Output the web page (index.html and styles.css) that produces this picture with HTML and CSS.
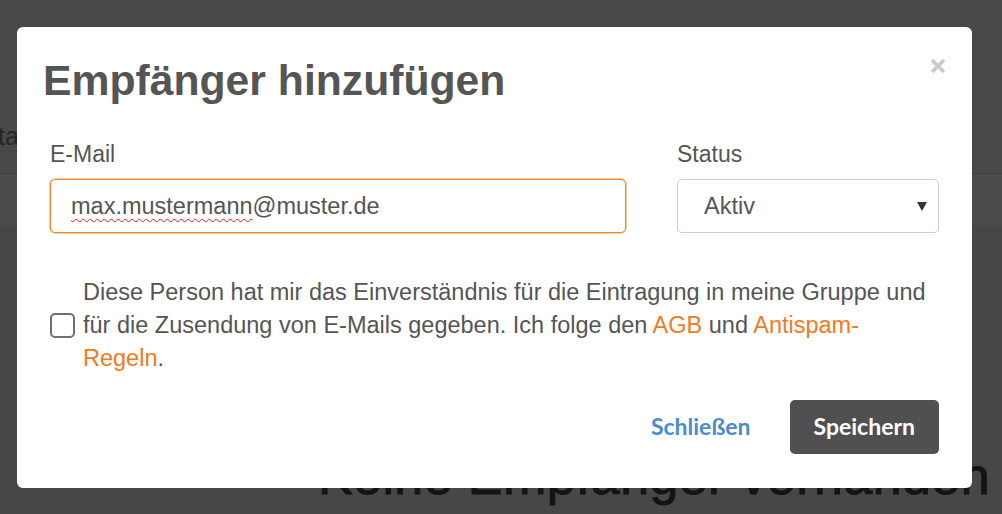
FILE: index.html
```html
<!DOCTYPE html>
<html lang="de">
<head>
<meta charset="utf-8">
<title>Empfänger hinzufügen</title>
<link rel="stylesheet" href="styles.css">
</head>
<body>
<div class="page">
  <header class="topbar"><span class="nav-frag">ta</span></header>
  <div class="subbar"></div>
  <main class="content">
    <h1 class="empty-title">Keine Empfänger vorhanden</h1>
  </main>
</div>

<div class="overlay">
  <div class="modal">
    <div class="modal-header">
      <h2 class="modal-title">Empfänger hinzufügen</h2>
      <button class="close" type="button" aria-label="Schließen">
        <svg width="16" height="16" viewBox="0 0 16 16"><path d="M2 2 L14 14 M14 2 L2 14" stroke="#c9c9c9" stroke-width="3.6" stroke-linecap="butt"/></svg>
      </button>
    </div>
    <div class="modal-body">
      <div class="form-row">
        <div class="field">
          <label class="label">E-Mail</label>
          <div class="input focused"><span class="misspelled">max.mustermann</span>@muster.de</div>
        </div>
        <div class="field">
          <label class="label">Status</label>
          <div class="input select"><span>Aktiv</span>
            <svg class="caret" width="10" height="9" viewBox="0 0 10 9"><path d="M0 0 H10 L5 9 Z" fill="#333"/></svg>
          </div>
        </div>
      </div>
      <div class="consent">
        <span class="checkbox"></span>
        <p class="consent-text">Diese Person hat mir das Einverständnis für die Eintragung in meine Gruppe und für die Zusendung von E-Mails gegeben. Ich folge den <a class="link">AGB</a> und <a class="link">Antispam-Regeln</a>.</p>
      </div>
    </div>
    <div class="modal-footer">
      <button class="btn btn-link" type="button">Schließen</button>
      <button class="btn btn-dark" type="button">Speichern</button>
    </div>
  </div>
</div>
</body>
</html>
```

FILE: styles.css
```css
html, body {
  margin: 0;
  padding: 0;
}
body {
  width: 1002px;
  height: 514px;
  overflow: hidden;
  background: #474747;
  font-family: "Liberation Sans", Arial, sans-serif;
}

/* underlying page (already dimmed by backdrop) */
.page {
  display: flex;
  flex-direction: column;
}
.topbar {
  height: 173px;
  background: #484848;
  border-bottom: 1px solid #3f3f3f;
  box-sizing: content-box;
}
.nav-frag {
  display: block;
  margin: 121px 0 0 -2px;
  font-size: 25px;
  line-height: 30px;
  color: #262626;
}
.subbar {
  height: 52px;
  background: #4b4b4b;
}
.content {
  padding: 0 0 0 318px;
}
.empty-title {
  margin: 220px 0 0 0;
  font-size: 52px;
  line-height: 60px;
  font-weight: normal;
  letter-spacing: 0.4px;
  color: #141414;
  white-space: nowrap;
  -webkit-text-stroke: 1px #141414;
}

/* overlay + modal */
.overlay {
  position: fixed;
  inset: 0;
  padding: 27px 0 0 17px;
}
.modal {
  width: 955px;
  box-sizing: border-box;
  background: #fff;
  border-radius: 6px;
  padding: 0 33px 34px 33px;
  color: #555;
}
.modal-header {
  display: flex;
  justify-content: space-between;
  align-items: flex-start;
  padding: 28px 0 0 0;
  margin: 0 -7px 0 -7px;
}
.modal-title {
  margin: 0;
  font-size: 42.7px;
  line-height: 50px;
  font-weight: bold;
  color: #555;
}
.close {
  margin-top: 3px;
  padding: 0;
  border: 0;
  background: none;
  width: 16px;
  height: 16px;
  display: block;
}
.close svg { display: block; }

.modal-body {
  padding-top: 35.5px;
}
.form-row {
  display: grid;
  grid-template-columns: 576px 1fr;
  column-gap: 51px;
}
.field {
  display: flex;
  flex-direction: column;
}
.label {
  font-size: 23px;
  line-height: 27px;
  color: #555;
  margin-bottom: 11.5px;
}
.input {
  height: 54px;
  box-sizing: border-box;
  border: 1px solid #cccccc;
  border-radius: 5px;
  display: flex;
  align-items: center;
  font-size: 23.5px;
  color: #555;
  white-space: nowrap;
}
.input.focused {
  border-color: #f5821f;
  box-shadow: 0 0 0 0.6px #f8a35a;
  padding-left: 20px;
}
.misspelled {
  text-decoration: underline wavy #e21b1b;
  text-decoration-thickness: 1px;
  text-underline-offset: 4px;
}
.input.select {
  justify-content: space-between;
  padding: 0 11px 0 26px;
}
.caret { display: block; margin-top: 1px; }

.consent {
  display: flex;
  align-items: center;
  gap: 8px;
  margin-top: 42.5px;
}
.checkbox {
  flex: none;
  width: 25px;
  height: 25px;
  box-sizing: border-box;
  border: 2px solid #707070;
  border-radius: 5px;
  background: #fff;
}
.consent-text {
  margin: 0;
  max-width: 850px;
  font-size: 23.5px;
  line-height: 33px;
  color: #555;
}
.link {
  color: #f47a20;
  text-decoration: none;
}

.modal-footer {
  display: flex;
  justify-content: flex-end;
  gap: 15px;
  margin-top: 25.5px;
}
.btn {
  height: 54px;
  padding: 0 24px 3px 24px;
  border: 0;
  border-radius: 5px;
  font-family: Lato, "Liberation Sans", sans-serif;
  font-weight: bold;
  font-size: 23px;
  display: flex;
  align-items: center;
}
.btn-link {
  background: transparent;
  color: #4b8cca;
}
.btn-dark {
  background: #505050;
  color: #fff;
}
```
